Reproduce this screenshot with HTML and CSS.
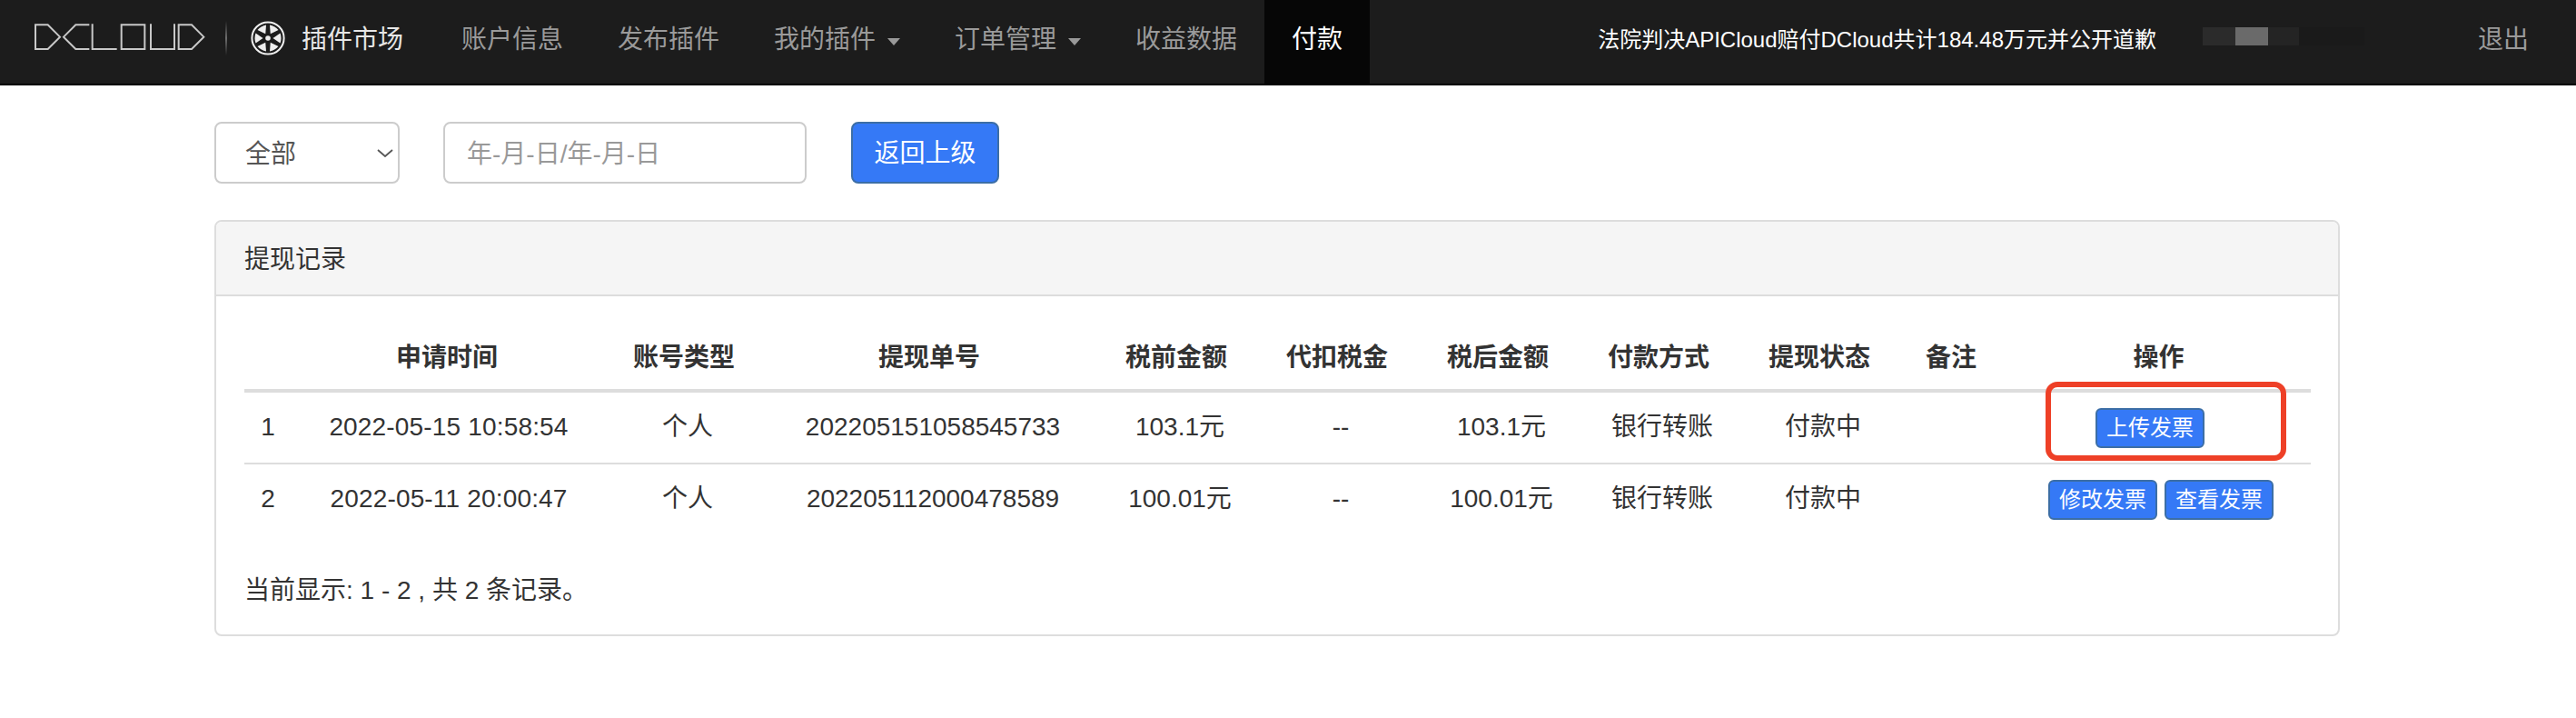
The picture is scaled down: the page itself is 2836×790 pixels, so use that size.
FILE: index.html
```html
<!DOCTYPE html>
<html lang="zh-CN">
<head>
<meta charset="utf-8">
<title>付款</title>
<link rel="stylesheet" href="styles.css">
</head>
<body>
<nav class="navbar">
  <svg class="logo" viewBox="0 0 630 150" aria-hidden="true">
    <g fill="none" stroke="#c8c8c8" stroke-width="6">
      <path d="M27 37H68L108 77L68 117H27Z"/>
      <path d="M205 37H160L120 77L160 117H205"/>
      <path d="M215 34V117H296"/>
      <path d="M311 37H388V117H311Z"/>
      <path d="M408 34V117H486V34"/>
      <path d="M500 37H543L583 77L543 117H500Z"/>
    </g>
  </svg>
  <span class="brand-sep"></span>
  <svg class="wheel" viewBox="-20 -20 40 40" aria-hidden="true">
    <circle r="17.6" fill="none" stroke="#eee" stroke-width="2"/>
    <circle r="2.8" fill="#eee"/>
    <g fill="#eee">
      <path d="M0-5.5L-5.5-13.5Q0-15.5 5.5-13.5Z" transform="rotate(30)"/>
      <path d="M0-5.5L-5.5-13.5Q0-15.5 5.5-13.5Z" transform="rotate(90)"/>
      <path d="M0-5.5L-5.5-13.5Q0-15.5 5.5-13.5Z" transform="rotate(150)"/>
      <path d="M0-5.5L-5.5-13.5Q0-15.5 5.5-13.5Z" transform="rotate(210)"/>
      <path d="M0-5.5L-5.5-13.5Q0-15.5 5.5-13.5Z" transform="rotate(270)"/>
      <path d="M0-5.5L-5.5-13.5Q0-15.5 5.5-13.5Z" transform="rotate(330)"/>
    </g>
  </svg>
  <a class="brand-title" href="#">插件市场</a>
  <ul class="nav-list">
    <li><a class="nav-link" href="#">账户信息</a></li>
    <li><a class="nav-link" href="#">发布插件</a></li>
    <li><a class="nav-link" href="#">我的插件<span class="caret"></span></a></li>
    <li><a class="nav-link" href="#">订单管理<span class="caret"></span></a></li>
    <li><a class="nav-link" href="#">收益数据</a></li>
    <li><a class="nav-link active" href="#">付款</a></li>
  </ul>
  <div class="nav-right">
    <a class="news" href="#">法院判决APICloud赔付DCloud共计184.48万元并公开道歉</a>
    <div class="mosaic" aria-hidden="true">
      <span class="m1"></span><span class="m2"></span><span class="m3"></span><span class="m4"></span>
    </div>
    <a class="nav-link" href="#">退出</a>
  </div>
</nav>

<main class="main">
  <form class="toolbar">
    <div class="select-wrap">
      <select class="select"><option>全部</option></select>
      <svg class="chevron" viewBox="0 0 18 9" aria-hidden="true"><path d="M1 1L9 8L17 1" fill="none" stroke="#555" stroke-width="1.8"/></svg>
    </div>
    <input class="date-input" type="text" placeholder="年-月-日/年-月-日">
    <button class="btn-back" type="button">返回上级</button>
  </form>

  <section class="panel">
    <div class="panel-heading">提现记录</div>
    <div class="panel-body">
      <table class="records">
        <colgroup>
          <col class="c-index"><col class="c-time"><col class="c-type"><col class="c-no"><col class="c-pre"><col class="c-tax"><col class="c-post"><col class="c-pay"><col class="c-state"><col class="c-note"><col class="c-op">
        </colgroup>
        <thead>
          <tr><th></th><th>申请时间</th><th>账号类型</th><th>提现单号</th><th>税前金额</th><th>代扣税金</th><th>税后金额</th><th>付款方式</th><th>提现状态</th><th class="th-note">备注</th><th>操作</th></tr>
        </thead>
        <tbody>
          <tr>
            <td>1</td><td class="td-time">2022-05-15 10:58:54</td><td>个人</td><td>202205151058545733</td><td>103.1元</td><td>--</td><td>103.1元</td><td>银行转账</td><td>付款中</td><td></td>
            <td class="ops"><a class="btn-xs btn-upload" href="#">上传发票</a></td>
          </tr>
          <tr>
            <td>2</td><td class="td-time">2022-05-11 20:00:47</td><td>个人</td><td>202205112000478589</td><td>100.01元</td><td>--</td><td>100.01元</td><td>银行转账</td><td>付款中</td><td></td>
            <td class="ops"><a class="btn-xs" href="#">修改发票</a><a class="btn-xs btn-next" href="#">查看发票</a></td>
          </tr>
        </tbody>
      </table>
      <p class="summary">当前显示: 1 - 2 , 共 2 条记录。</p>
    </div>
    <div class="annotation"></div>
  </section>
</main>
</body>
</html>
```

FILE: styles.css
```css
* { box-sizing: border-box; }

html, body {
  margin: 0;
  padding: 0;
  background: #fff;
}

body {
  font-family: "Liberation Sans", "Noto Sans CJK SC", sans-serif;
  font-size: 28px;
  line-height: 40px;
  color: #333;
}

a { text-decoration: none; }

/* navbar */
.navbar {
  display: flex;
  align-items: flex-start;
  height: 94px;
  background: #1c1c1c;
  border-bottom: 2px solid #000;
}

.logo {
  width: 210px;
  height: 50px;
  margin: 15px 0 0 30px;
  flex: none;
}

.brand-sep {
  width: 2px;
  height: 38px;
  margin: 23px 0 0 8px;
  background: linear-gradient(to bottom, rgba(120,120,120,0), #6e6e6e 50%, rgba(120,120,120,0));
  flex: none;
}

.wheel {
  width: 40px;
  height: 40px;
  margin: 22px 0 0 25px;
  flex: none;
}

.brand-title {
  margin: 24px 34px 0 17px;
  color: #e6e6e6;
  flex: none;
}

.nav-list {
  display: flex;
  margin: 0;
  padding: 0;
  list-style: none;
}

.nav-link {
  display: block;
  height: 92px;
  padding: 24px 30px 0;
  color: #9a9a9a;
}

.nav-link.active {
  background: #060606;
  color: #fff;
}

.caret {
  display: inline-block;
  width: 0;
  height: 0;
  margin: 0 0 0 13px;
  vertical-align: 3px;
  border-top: 8px solid #999;
  border-left: 7.5px solid transparent;
  border-right: 7.5px solid transparent;
}

.nav-right {
  display: flex;
  align-items: flex-start;
  margin-left: auto;
  padding-right: 22px;
}

.news {
  margin-top: 24px;
  font-size: 24px;
  color: #fff;
}

.mosaic {
  display: flex;
  width: 273px;
  height: 20px;
  margin: 30px 0 0 51px;
}

.mosaic span { display: block; height: 20px; }
.m1 { width: 36px; background: #2b2b2b; }
.m2 { width: 36px; background: #6a6a6a; }
.m3 { width: 34px; background: #242424; }
.m4 { width: 72px; background: #1a1a1a; }

/* main */
.main {
  width: 2340px;
  margin: 40px 0 0 236px;
}

.toolbar {
  display: flex;
  align-items: flex-start;
  margin: 0 0 40px;
}

.select-wrap {
  position: relative;
  width: 204px;
  height: 68px;
  margin-right: 48px;
}

.select {
  appearance: none;
  -webkit-appearance: none;
  display: block;
  width: 100%;
  height: 100%;
  padding: 4px 0 0 32px;
  border: 2px solid #ccc;
  border-radius: 8px;
  background: #fff;
  font: inherit;
  color: #555;
}

.chevron {
  position: absolute;
  top: 30px;
  right: 7px;
  width: 18px;
  height: 9px;
}

.date-input {
  width: 400px;
  height: 68px;
  margin-right: 49px;
  padding: 3px 24px 0;
  border: 2px solid #ccc;
  border-radius: 8px;
  font: inherit;
  color: #555;
}

.date-input::placeholder {
  color: #999;
  opacity: 1;
}

.btn-back {
  width: 163px;
  height: 68px;
  padding: 2px 0 0;
  border: 2px solid #3c6ea6;
  border-radius: 8px;
  background: #3579f6;
  font: inherit;
  color: #fff;
}

/* panel */
.panel {
  position: relative;
  height: 458px;
  border: 2px solid #ddd;
  border-radius: 8px;
  background: #fff;
}

.panel-heading {
  height: 82px;
  padding: 22px 30px 18px 31px;
  border-bottom: 2px solid #ddd;
  border-radius: 6px 6px 0 0;
  background: #f5f5f5;
}

.panel-body { padding: 30px 30px 30px 31px; }

.records {
  width: 2275px;
  table-layout: fixed;
  border-collapse: separate;
  border-spacing: 0;
  margin-bottom: 42px;
}

.c-index { width: 52px; }
.c-time { width: 350px; }
.c-type { width: 172px; }
.c-no { width: 368px; }
.c-pre { width: 176px; }
.c-tax { width: 178px; }
.c-post { width: 176px; }
.c-pay { width: 178px; }
.c-state { width: 176px; }
.c-note { width: 122px; }
.c-op { width: 327px; }

.records th {
  padding: 18px 8px 14px 0;
  border-bottom: 4px solid #ddd;
  text-align: center;
  font-weight: 700;
}

.records .th-note { padding-right: 16px; }

.records td {
  padding: 18px 0 14px;
  height: 77px;
  text-align: center;
  vertical-align: top;
}

.records .td-time {
  padding-right: 4px;
  letter-spacing: 0.17px;
}

.records tbody tr:first-child td {
  height: 79px;
  border-bottom: 2px solid #ddd;
}

.records .ops {
  padding: 17px 3px 0 0;
  font-size: 0;
  line-height: 0;
}

.btn-xs {
  display: inline-block;
  width: 120px;
  height: 44px;
  border: 2px solid #3c6ea6;
  border-radius: 6px;
  background: #3579f6;
  font-size: 24px;
  line-height: 40px;
  color: #fff;
  vertical-align: top;
}

.btn-upload { margin-right: 24px; }
.btn-next { margin-left: 8px; }

.summary { margin: 0; }

/* annotation drawn over the table */
.annotation {
  position: absolute;
  top: 176px;
  right: 57px;
  width: 265px;
  height: 87px;
  border: 6px solid #ee4027;
  border-radius: 13px;
}
```
